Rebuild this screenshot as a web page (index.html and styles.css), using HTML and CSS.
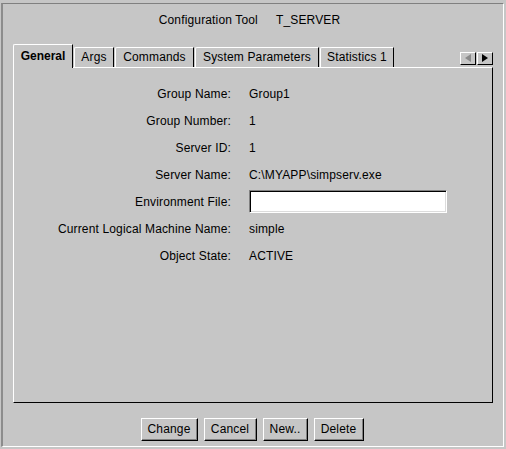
FILE: index.html
```html
<!DOCTYPE html>
<html>
<head>
<meta charset="utf-8">
<link rel="stylesheet" href="styles.css">
</head>
<body>
<div class="frame">
  <div class="title">
    <span>Configuration Tool</span>
    <span>T_SERVER</span>
  </div>
  <div class="tabstrip">
    <div class="tab selected w-general">General</div>
    <div class="tab w-args">Args</div>
    <div class="tab w-commands">Commands</div>
    <div class="tab w-sys">System Parameters</div>
    <div class="tab w-stats">Statistics 1</div>
    <div class="scroll">
      <div class="arrow disabled">
        <svg width="8" height="9" viewBox="0 0 8 9"><polygon points="7,0 7,8 1,4" fill="#8a8a8a"/></svg>
      </div>
      <div class="arrow">
        <svg width="8" height="9" viewBox="0 0 8 9"><polygon points="1,0 1,8 7,4" fill="#000"/></svg>
      </div>
    </div>
  </div>
  <div class="panel">
    <div class="form">
      <div class="label">Group Name:</div><div class="value">Group1</div>
      <div class="label">Group Number:</div><div class="value">1</div>
      <div class="label">Server ID:</div><div class="value">1</div>
      <div class="label">Server Name:</div><div class="value">C:\MYAPP\simpserv.exe</div>
      <div class="label">Environment File:</div><div class="value"><div class="input"></div></div>
      <div class="label">Current Logical Machine Name:</div><div class="value">simple</div>
      <div class="label">Object State:</div><div class="value">ACTIVE</div>
    </div>
  </div>
  <div class="buttons">
    <div class="btn b-change">Change</div>
    <div class="btn b-cancel">Cancel</div>
    <div class="btn b-new">New..</div>
    <div class="btn b-delete">Delete</div>
  </div>
</div>
</body>
</html>
```

FILE: styles.css
```css
html, body {
  margin: 0;
  padding: 0;
  background: #c6c6c6;
}
body {
  width: 506px;
  height: 449px;
  overflow: hidden;
  font-family: "Liberation Sans", Arial, sans-serif;
  font-size: 12px;
  letter-spacing: 0.15px;
  color: #000;
}
.frame {
  box-sizing: border-box;
  margin: 3px 0 0 1px;
  width: 503px;
  height: 444px;
  border-top: 1px solid #808080;
  border-left: 2px solid #8c8c8c;
  border-right: 1px solid #ffffff;
  border-bottom: 1px solid #ffffff;
  display: flex;
  flex-direction: column;
}
.title {
  padding-top: 9px;
  height: 14px;
  line-height: 14px;
  display: flex;
  justify-content: center;
  gap: 18px;
  padding-right: 7px;
}
.tabstrip {
  margin-top: 17px;
  margin-left: 10px;
  width: 480px;
  height: 23px;
  display: flex;
  align-items: flex-end;
  gap: 1px;
}
.tab {
  box-sizing: border-box;
  height: 20px;
  line-height: 19px;
  text-align: center;
  border-top: 1px solid #ffffff;
  border-left: 1px solid #ffffff;
  border-right: 1px solid #000;
  border-top-left-radius: 2px;
  background: #c6c6c6;
  white-space: nowrap;
}
.tab.selected {
  height: 24px;
  margin-bottom: -1px;
  position: relative;
  z-index: 1;
  font-weight: bold;
  letter-spacing: 0;
  line-height: 22px;
}
.w-general { width: 60px; }
.w-args { width: 40px; }
.w-commands { width: 79px; }
.w-sys { width: 124px; }
.w-stats { width: 74px; }
.scroll {
  margin-left: auto;
  margin-bottom: 2px;
  display: flex;
  gap: 1px;
}
.arrow {
  box-sizing: border-box;
  width: 16px;
  height: 13px;
  border-top: 1px solid #ffffff;
  border-left: 1px solid #ffffff;
  border-right: 1px solid #000;
  border-bottom: 1px solid #000;
  display: flex;
  align-items: center;
  justify-content: center;
}
.arrow svg { display: block; }
.panel {
  box-sizing: border-box;
  margin-left: 10px;
  width: 480px;
  height: 336px;
  border-top: 1px solid #ffffff;
  border-left: 1px solid #ffffff;
  border-right: 1px solid #000;
  border-bottom: 1px solid #000;
}
.form {
  padding-top: 12px;
  display: grid;
  grid-template-columns: 217px 198px;
  grid-auto-rows: 27px;
  column-gap: 18px;
  align-items: center;
}
.label {
  text-align: right;
  white-space: nowrap;
}
.value { white-space: nowrap; }
.input {
  box-sizing: border-box;
  width: 198px;
  height: 23px;
  background: #fff;
  border-top: 1px solid #808080;
  border-left: 1px solid #808080;
  border-right: 1px solid #ffffff;
  border-bottom: 1px solid #ffffff;
  box-shadow: inset 1px 1px 0 #000, inset -1px -1px 0 #dcdcdc;
}
.buttons {
  margin-top: 15px;
  display: flex;
  justify-content: center;
  gap: 6px;
  padding-right: 2px;
}
.btn {
  box-sizing: border-box;
  height: 23px;
  line-height: 21px;
  text-align: center;
  border-top: 1px solid #ffffff;
  border-left: 1px solid #ffffff;
  border-right: 1px solid #000;
  border-bottom: 1px solid #000;
  box-shadow: inset -1px -1px 0 #808080;
}
.b-change { width: 57px; }
.b-cancel { width: 53px; }
.b-new { width: 45px; }
.b-delete { width: 50px; }
```
